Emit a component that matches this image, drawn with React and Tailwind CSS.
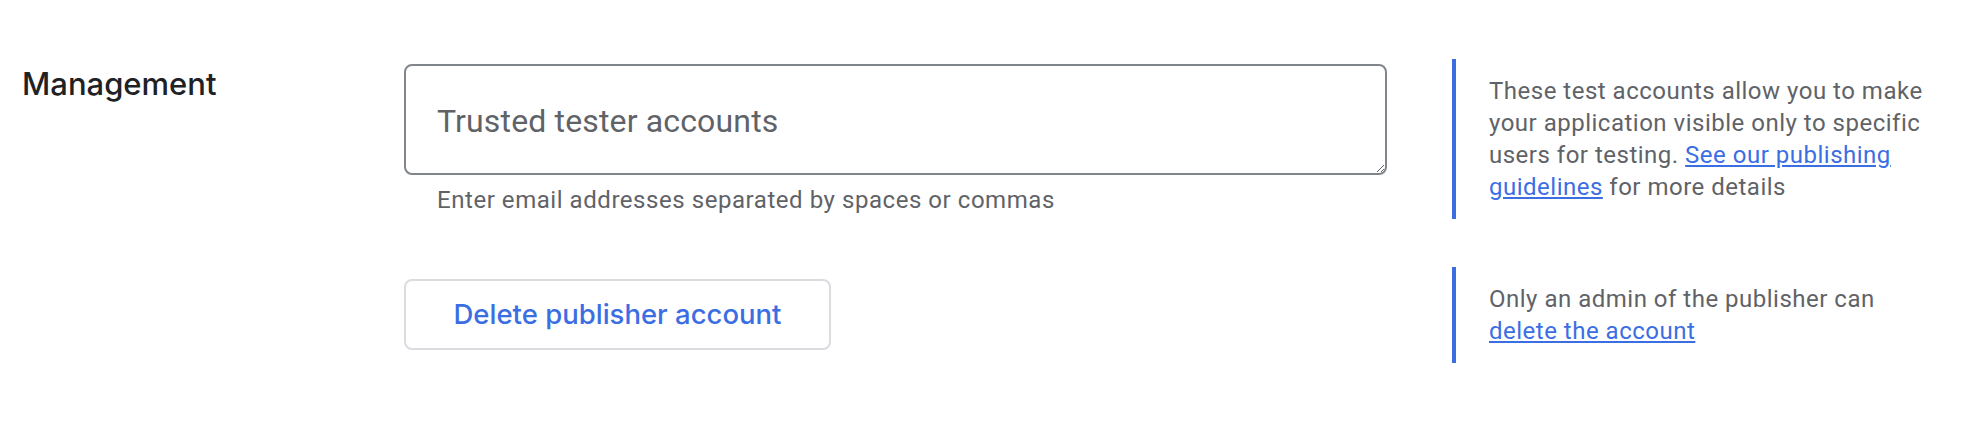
import React from 'react';

const bodyFont = { fontFamily: 'Roboto, "Liberation Sans", sans-serif' };
const headFont = { fontFamily: 'Inter, "Open Sans", sans-serif' };

const HelpPanel = ({ children }) => (
  <div className="ml-[65px] w-[485px] border-l-4 border-[#3b6ee3] py-4 pl-[33px]">
    <p className="w-[448px] text-[24px] leading-[32px] tracking-[0.5px] text-[#5f6368]" style={bodyFont}>
      {children}
    </p>
  </div>
);

const App = () => {
  return (
    <div className="min-h-[428px] w-[1974px] bg-white pl-[22px] pt-[59px]">
      <div className="flex items-start">
        <div className="mt-[5px] w-[382px]">
          <h2 className="text-[31px] font-medium leading-[40px] text-[#202124]" style={headFont}>
            Management
          </h2>
        </div>
        <div className="mt-[5px] w-[983px]">
          <textarea
            placeholder="Trusted tester accounts"
            className="block h-[111px] w-full rounded-[8px] border-2 border-[#80868b] px-[31px] pt-[35px] text-[32px] leading-[40px] tracking-[0.15px] text-[#202124] outline-none placeholder:text-[#5f6368]"
            style={bodyFont}
          />
          <p className="ml-[33px] mt-[9px] text-[24px] leading-[32px] tracking-[0.55px] text-[#5f6368]" style={bodyFont}>
            Enter email addresses separated by spaces or commas
          </p>
        </div>
        <HelpPanel>
          These test accounts allow you to make your application visible only to specific users for testing.{' '}
          <a href="#" className="text-[#3b6ee3] underline">
            See our publishing guidelines
          </a>{' '}
          for more details
        </HelpPanel>
      </div>

      <div className="mt-[48px] flex items-start">
        <div className="w-[382px]" />
        <div className="mt-[12px] w-[983px]">
          <button
            className="h-[71px] w-[427px] rounded-[8px] border-2 border-[#dadce0] bg-white text-[27.5px] font-medium text-[#3b6ee3]"
            style={headFont}>
            Delete publisher account
          </button>
        </div>
        <HelpPanel>
          Only an admin of the publisher can{' '}
          <a href="#" className="text-[#3b6ee3] underline">
            delete the account
          </a>
        </HelpPanel>
      </div>
    </div>
  );
};

export default App;
